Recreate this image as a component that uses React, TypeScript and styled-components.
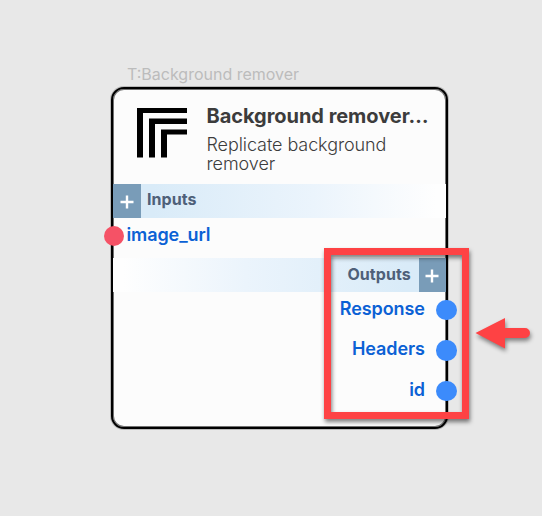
import React from 'react';
import styled, { createGlobalStyle } from 'styled-components';

const GlobalStyle = createGlobalStyle`
  * { box-sizing: border-box; }
  body { margin: 0; background: #e8e8e8; font-family: Inter, "Liberation Sans", sans-serif; }
`;

const Canvas = styled.main`
  position: relative;
  width: 542px;
  height: 516px;
  overflow: hidden;
  padding: 65px 0 0 111px;
  background: #e8e8e8;
`;

const TypeLabel = styled.div`
  height: 22px;
  padding-left: 16px;
  font-size: 16px;
  line-height: 19px;
  color: #bcbcbc;
  white-space: nowrap;
`;

const Card = styled.section`
  width: 337px;
  height: 342px;
  border: 2px solid #000;
  border-radius: 13px;
  background: #fcfcfc;
  box-shadow: 0 0 0 1px rgba(0, 0, 0, 0.2), inset 0 0 0 1px rgba(0, 0, 0, 0.55);
`;

const Header = styled.header`
  display: flex;
  height: 95px;
  padding: 18px 0 0 24px;
  gap: 19.5px;
`;

const Logo = styled.svg`
  flex: none;
  width: 50px;
  height: 50px;
  margin-top: 1px;
`;

const Heading = styled.div`
  width: 228px;
  color: #3c3c3c;
`;

const Title = styled.h1`
  margin: -3px 0 0;
  font-size: 20px;
  line-height: 24px;
  font-weight: 700;
  letter-spacing: -0.04px;
  white-space: nowrap;
`;

const Description = styled.p`
  margin: 7px 0 0;
  width: 200px;
  font-size: 18px;
  line-height: 19px;
  font-weight: 300;
  letter-spacing: -0.08px;
`;

const Band = styled.div<{ $side: 'left' | 'right' }>`
  display: flex;
  flex-direction: ${(p) => (p.$side === 'left' ? 'row' : 'row-reverse')};
  height: 34px;
  background: linear-gradient(to ${(p) => (p.$side === 'left' ? 'right' : 'left')}, #d9ebf8 12%, #ebf4fc 60%, #fefefe 97%);
`;

const AddButton = styled.button<{ $side: 'left' | 'right' }>`
  display: flex;
  align-items: center;
  justify-content: center;
  width: ${(p) => (p.$side === 'left' ? 28 : 27.5)}px;
  height: 34px;
  padding: ${(p) => (p.$side === 'left' ? '1px 0.5px 0 0' : '2px 1.5px 0 0')};
  border: 0;
  background: #799cb8;
`;

const BandLabel = styled.span<{ $side: 'left' | 'right' }>`
  padding: ${(p) => (p.$side === 'left' ? '0 0 0 6px' : '0 7.8px 0 0')};
  font-size: 16px;
  line-height: ${(p) => (p.$side === 'left' ? 31 : 32)}px;
  font-weight: 700;
  letter-spacing: 0.05px;
  color: #4e6079;
`;

const PortRow = styled.div<{ $side: 'left' | 'right' }>`
  display: flex;
  flex-direction: ${(p) => (p.$side === 'left' ? 'row' : 'row-reverse')};
  align-items: center;
  gap: ${(p) => (p.$side === 'left' ? 2.2 : 11.2)}px;
  height: 40.5px;
  margin: ${(p) => (p.$side === 'left' ? '-2.5px 0 2px -9.2px' : '0 -10.5px 0 0')};
`;

const PortName = styled.span`
  font-size: 18px;
  line-height: 22px;
  font-weight: 600;
  letter-spacing: -0.08px;
  color: #0b61d5;
  transform: translateY(-1.2px);
`;

const Dot = styled.span<{ $color: string }>`
  width: 20.4px;
  height: 20.4px;
  flex: none;
  border-radius: 50%;
  background: ${(p) => p.$color};
`;

const Outputs = styled.div`
  margin-top: -2.3px;
`;

const Highlight = styled.div`
  position: absolute;
  left: 324px;
  top: 248px;
  width: 145px;
  height: 171px;
  border: 7px solid #fe4244;
  filter: drop-shadow(1px 3px 2px rgba(0, 0, 0, 0.5));
`;

const Arrow = styled.svg`
  position: absolute;
  left: 470px;
  top: 312px;
  width: 68px;
  height: 46px;
  filter: drop-shadow(1px 3px 2px rgba(0, 0, 0, 0.45));
`;

const Plus = () => (
  <svg width="14" height="14" viewBox="0 0 14 14" aria-hidden="true">
    <path d="M7 .5v13M.5 7h13" stroke="#fff" strokeWidth="2.4" />
  </svg>
);

const outputs = ['Response', 'Headers', 'id'];

export default function App() {
  return (
    <>
      <GlobalStyle />
      <Canvas>
        <TypeLabel>T:Background remover</TypeLabel>
        <Card>
          <Header>
            <Logo viewBox="0 0 50 50" aria-label="Replicate">
              <path d="M0 0H50V5H6V49.5H0ZM12 10.5H50V16H18V49.5H12ZM24 21.5H50V26.5H30V49.5H24Z" fill="#000" />
            </Logo>
            <Heading>
              <Title>Background remover…</Title>
              <Description>Replicate background remover</Description>
            </Heading>
          </Header>
          <Band $side="left">
            <AddButton $side="left" aria-label="Add input"><Plus /></AddButton>
            <BandLabel $side="left">Inputs</BandLabel>
          </Band>
          <PortRow $side="left">
            <Dot $color="#f55266" />
            <PortName>image_url</PortName>
          </PortRow>
          <Band $side="right">
            <AddButton $side="right" aria-label="Add output"><Plus /></AddButton>
            <BandLabel $side="right">Outputs</BandLabel>
          </Band>
          <Outputs>
            {outputs.map((name) => (
              <PortRow $side="right" key={name}>
                <Dot $color="#3c8bfb" />
                <PortName>{name}</PortName>
              </PortRow>
            ))}
          </Outputs>
        </Card>
        <Highlight />
        <Arrow viewBox="0 0 68 46" aria-hidden="true">
          <path d="M5.5 21 35 6v10h20a5 5 0 0 1 0 10H35v10.5Z" fill="#fe4244" />
        </Arrow>
      </Canvas>
    </>
  );
}
